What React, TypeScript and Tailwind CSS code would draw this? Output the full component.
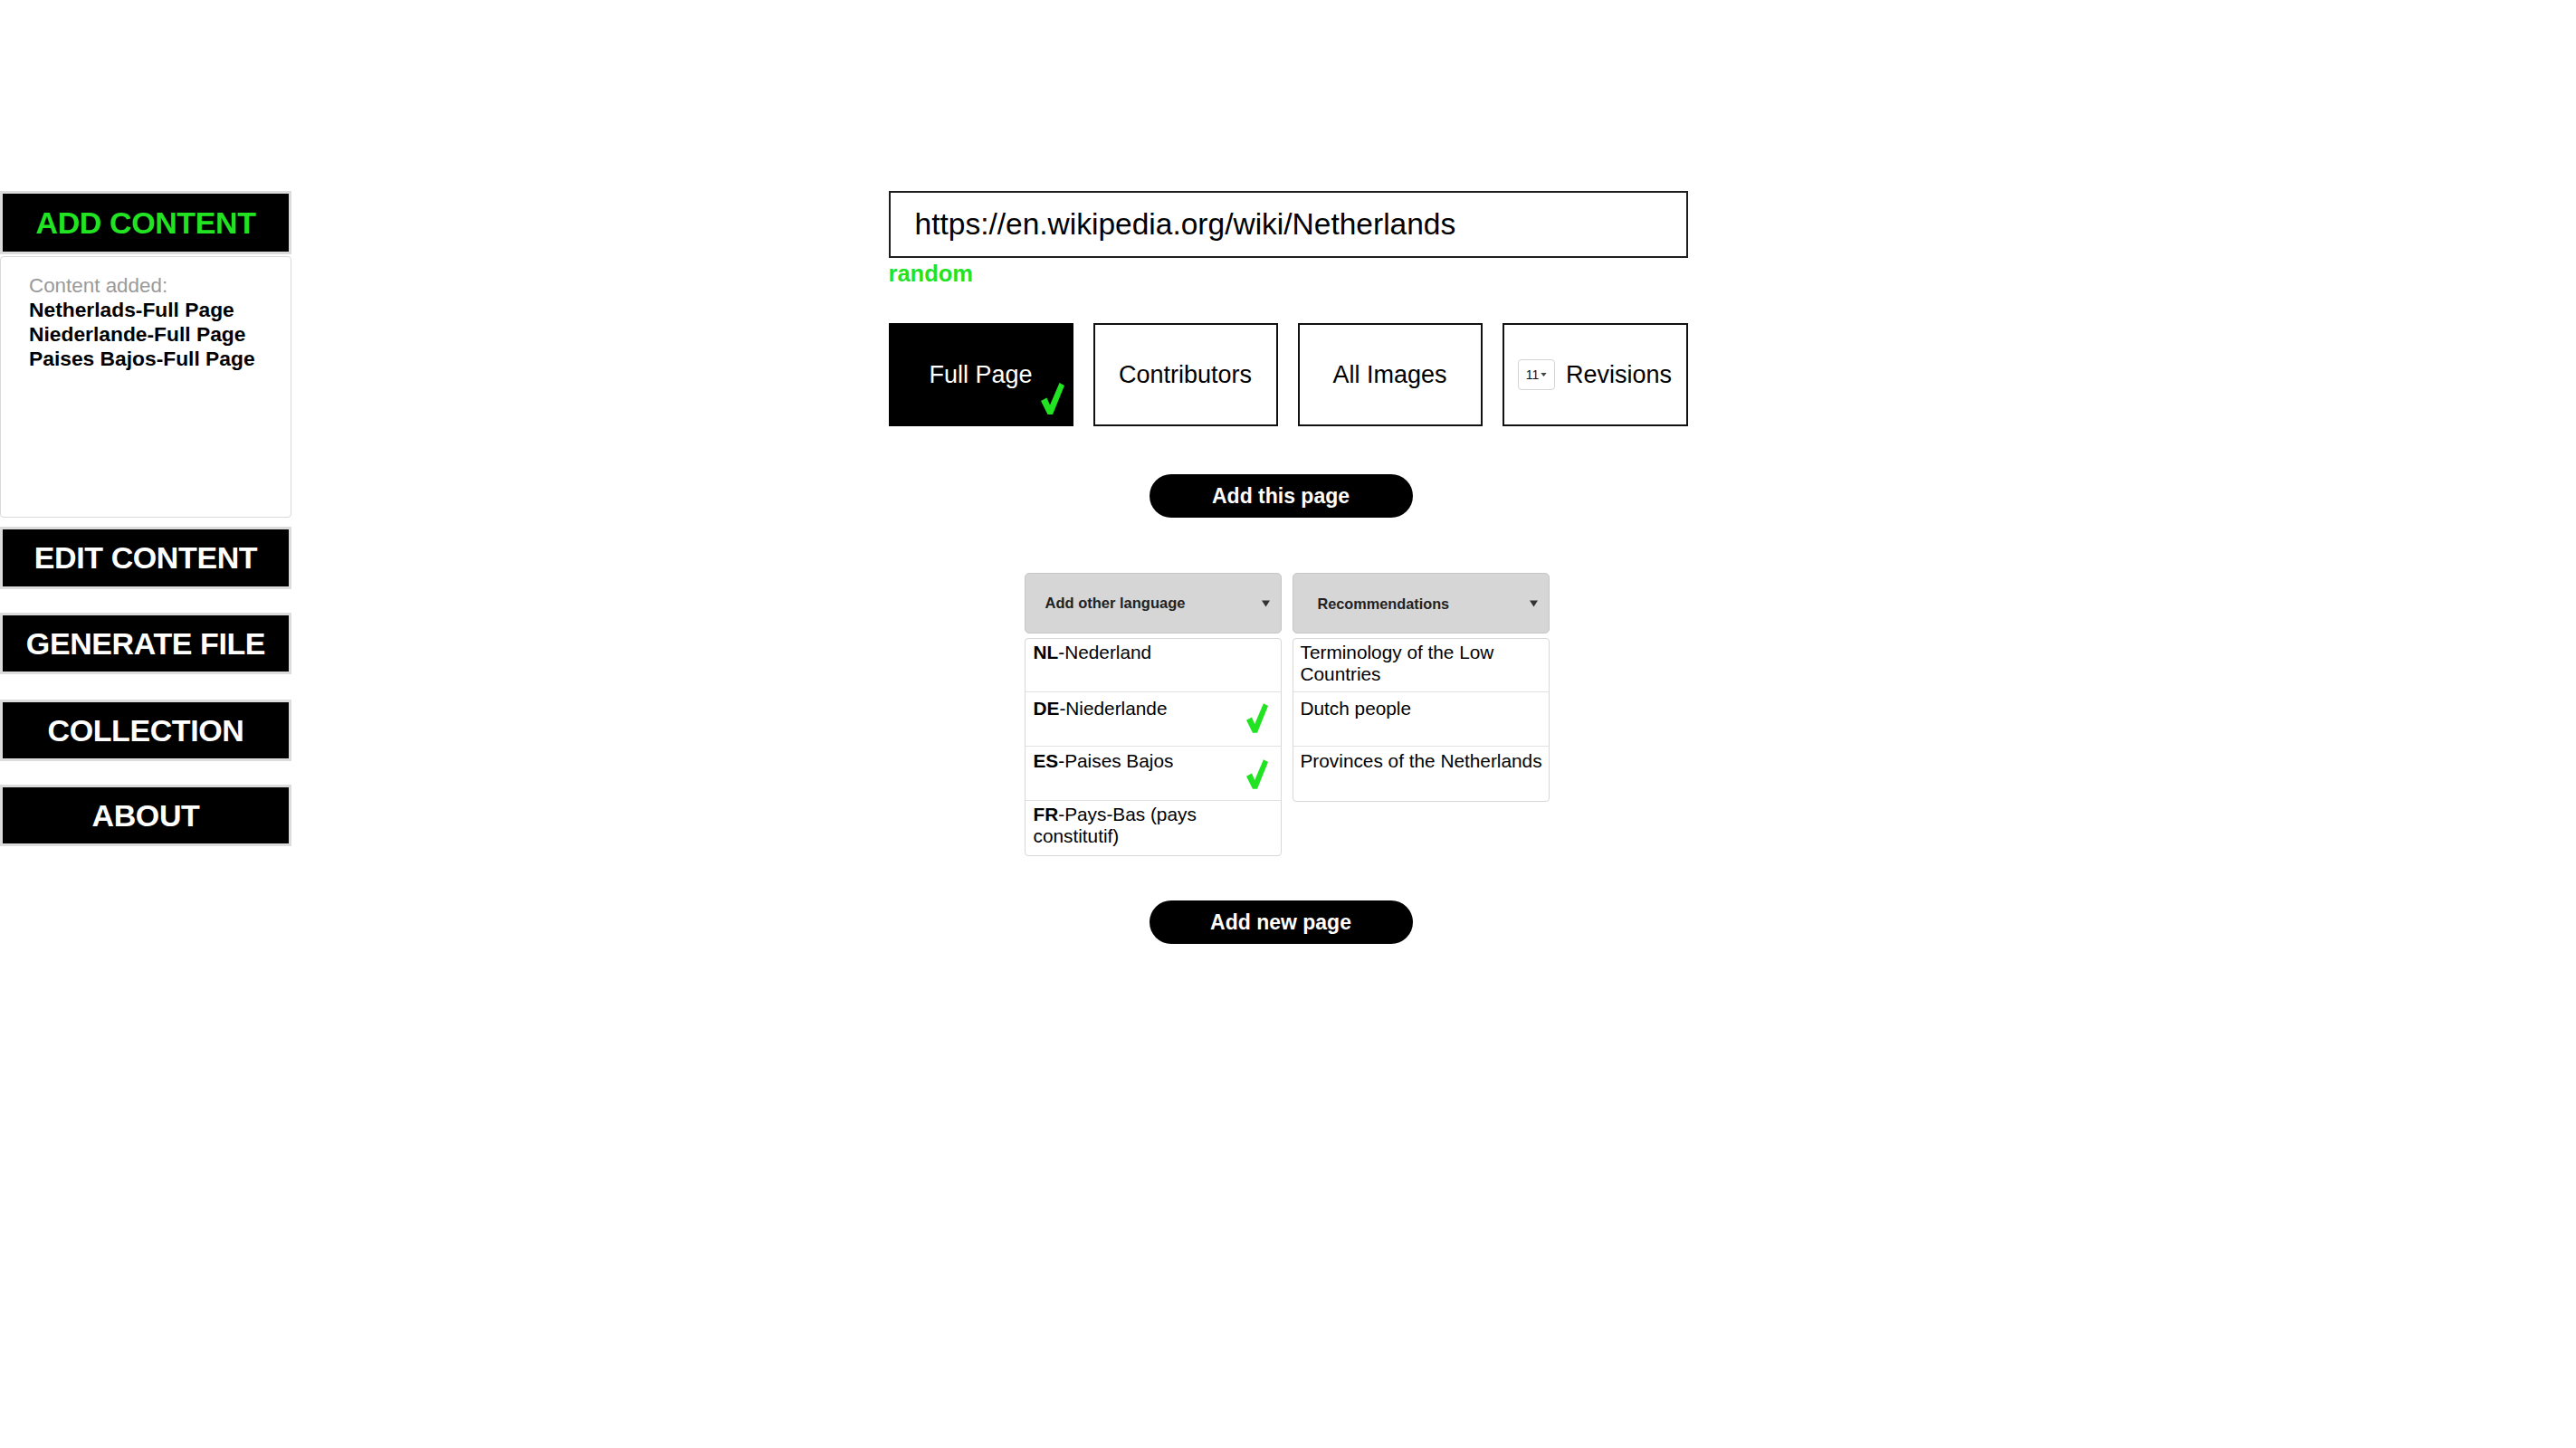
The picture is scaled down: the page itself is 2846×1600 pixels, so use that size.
import React from "react";

const GREEN = "#22e322";

function Check({ className }: { className?: string }) {
  return (
    <svg viewBox="0 0 26 35" className={className}>
      <polygon points="0,20 6.5,16.5 10,24.5 20.5,0 26,3 13,35 7.5,35" fill={GREEN} />
    </svg>
  );
}

function Caret() {
  return (
    <svg viewBox="0 0 10 8" className="w-[9px] h-[8px]">
      <polygon points="0,0 10,0 5,8" fill="#333" />
    </svg>
  );
}

function SideButton({ label, green, className }: { label: string; green?: boolean; className?: string }) {
  return (
    <div
      className={`w-[322px] border-[3px] border-[#dcdcdc] bg-black flex items-center justify-center ${className ?? ""}`}
    >
      <span
        className={`text-[34px] font-bold tracking-[-0.4px] ${green ? "text-[#22e322]" : "text-white"}`}
      >
        {label}
      </span>
    </div>
  );
}

export default function App() {
  const font = { fontFamily: '"Liberation Sans", Arial, Helvetica, sans-serif' };
  return (
    <div className="w-[2846px] h-[1600px] bg-white grid grid-cols-[1fr_883px_1fr]" style={font}>
      {/* Sidebar */}
      <div className="pt-[211px] flex flex-col">
        <SideButton label="ADD CONTENT" green className="h-[70px]" />
        <div className="mt-[2px] w-[322px] h-[289px] border border-[#d9d9d9] rounded-[4px] pl-[31px] pt-[18px] text-[22.8px] leading-[27px]">
          <div className="text-[#9a9a9a] text-[22.4px]">Content added:</div>
          <div className="font-bold text-black">Netherlads-Full Page</div>
          <div className="font-bold text-black">Niederlande-Full Page</div>
          <div className="font-bold text-black">Paises Bajos-Full Page</div>
        </div>
        <SideButton label="EDIT CONTENT" className="mt-[10px] h-[69px]" />
        <SideButton label="GENERATE FILE" className="mt-[26px] h-[68px]" />
        <SideButton label="COLLECTION" className="mt-[28px] h-[68px]" />
        <SideButton label="ABOUT" className="mt-[26px] h-[68px]" />
      </div>

      {/* Main column */}
      <div className="pt-[211px] flex flex-col">
        <div className="h-[74px] border-2 border-[#1e1e1e] flex items-center pl-[27px]">
          <span className="text-[33.5px] text-black">https://en.wikipedia.org/wiki/Netherlands</span>
        </div>
        <div className="mt-[3px] text-[25.5px] leading-[28px] font-bold text-[#22e322]">random</div>

        <div className="mt-[41px] flex justify-between">
          <div className="relative w-[204px] h-[114px] bg-black flex items-center justify-center">
            <span className="text-[27px] text-white">Full Page</span>
            <Check className="absolute right-[10px] bottom-[13px] w-[26px] h-[35px]" />
          </div>
          <div className="w-[204px] h-[114px] border-2 border-[#111] flex items-center justify-center">
            <span className="text-[27px] text-black">Contributors</span>
          </div>
          <div className="w-[204px] h-[114px] border-2 border-[#111] flex items-center justify-center">
            <span className="text-[27px] text-black">All Images</span>
          </div>
          <div className="w-[205px] h-[114px] border-2 border-[#111] flex items-center justify-center gap-[12px]">
            <div className="w-[41px] h-[34px] border border-[#d4d4d4] rounded-[4px] flex items-center justify-center gap-[2px]">
              <span className="text-[14px] text-[#111]">11</span>
              <svg viewBox="0 0 8 5" className="w-[7px] h-[4px]">
                <polygon points="0,0 8,0 4,5" fill="#444" />
              </svg>
            </div>
            <span className="text-[27px] text-black">Revisions</span>
          </div>
        </div>

        <div className="mt-[53px] flex justify-center pr-[16px]">
          <div className="w-[291px] h-[48px] rounded-full bg-black flex items-center justify-center">
            <span className="text-[23px] font-bold text-white">Add this page</span>
          </div>
        </div>

        <div className="mt-[61px] flex justify-center items-start gap-[12px] pr-[3px]">
          {/* Language column */}
          <div className="w-[284px] flex flex-col">
            <div className="h-[67px] bg-[#d6d6d6] border border-[#c6c6c6] rounded-[5px] flex items-center justify-between pl-[22px] pr-[12px]">
              <span className="text-[16.5px] font-bold text-[#222]">Add other language</span>
              <Caret />
            </div>
            <div className="mt-[5px] border border-[#d8d8d8] rounded-[4px] text-[20.8px] leading-[24px] text-black">
              <div className="relative h-[58px] pl-[9px] pt-[3px]">
                <b>NL</b>-Nederland
              </div>
              <div className="relative h-[60px] pl-[9px] pt-[6px] border-t border-[#e2e2e2]">
                <b>DE</b>-Niederlande
                <Check className="absolute right-[14px] bottom-[14px] w-[24px] h-[33px]" />
              </div>
              <div className="relative h-[60px] pl-[9px] pt-[4px] border-t border-[#e2e2e2]">
                <b>ES</b>-Paises Bajos
                <Check className="absolute right-[14px] bottom-[12px] w-[24px] h-[33px]" />
              </div>
              <div className="relative h-[61px] pl-[9px] pt-[3px] border-t border-[#e2e2e2]">
                <b>FR</b>-Pays-Bas (pays
                <br />
                constitutif)
              </div>
            </div>
          </div>

          {/* Recommendations column */}
          <div className="w-[284px] flex flex-col">
            <div className="h-[67px] bg-[#d6d6d6] border border-[#c6c6c6] rounded-[5px] flex items-center justify-between pl-[27px] pr-[12px]">
              <span className="text-[16.3px] font-bold text-[#222] pt-[2px]">Recommendations</span>
              <Caret />
            </div>
            <div className="mt-[5px] border border-[#d8d8d8] rounded-[4px] text-[20.8px] leading-[24px] text-black">
              <div className="h-[58px] pl-[8px] pt-[3px]">
                Terminology of the Low
                <br />
                Countries
              </div>
              <div className="h-[60px] pl-[8px] pt-[6px] border-t border-[#e2e2e2]">Dutch people</div>
              <div className="h-[61px] pl-[8px] pt-[4px] border-t border-[#e2e2e2]">Provinces of the Netherlands</div>
            </div>
          </div>
        </div>

        <div className="mt-[49px] flex justify-center pr-[16px]">
          <div className="w-[291px] h-[48px] rounded-full bg-black flex items-center justify-center">
            <span className="text-[23px] font-bold text-white">Add new page</span>
          </div>
        </div>
      </div>

      <div />
    </div>
  );
}
